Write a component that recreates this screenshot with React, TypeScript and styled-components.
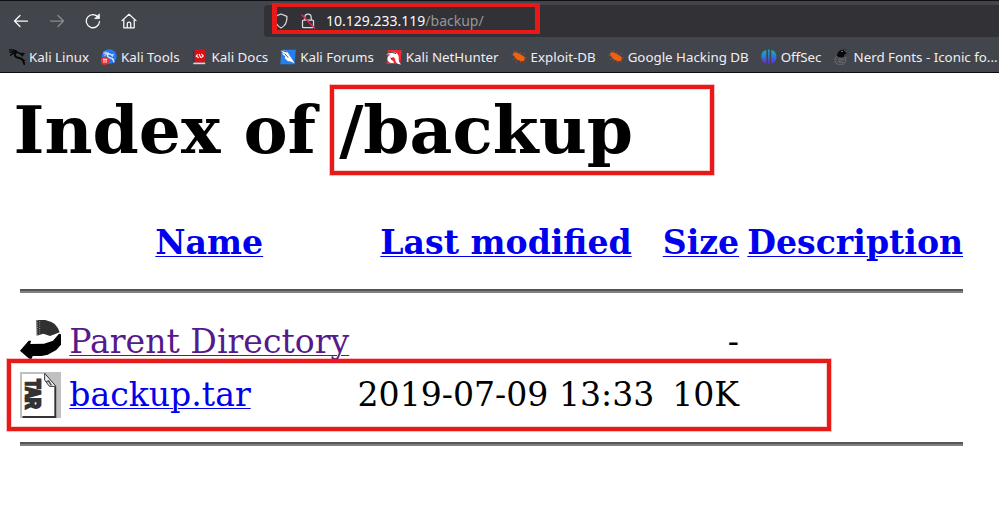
import React from 'react';
import styled, { createGlobalStyle } from 'styled-components';

const GlobalStyle = createGlobalStyle`
  html, body { margin: 0; background: #fff; overflow: hidden; }
  * { box-sizing: border-box; }
`;

const Window = styled.div`
  position: relative;
  width: 999px;
  height: 523px;
  overflow: hidden;
  background: #fff;
`;

const Chrome = styled.header`
  height: 73px;
  background: #43454c;
  border-top: 1px solid #101014;
  border-bottom: 1px solid #0c0c0f;
  font-family: 'Noto Sans', sans-serif;
  font-size: 13.33px;
  color: #fbfbfe;
`;

const NavBar = styled.nav`
  display: flex;
  align-items: center;
  height: 40px;
  padding-left: 13px;
`;

const NavButton = styled.span<{ $dim?: boolean }>`
  display: flex;
  width: 16px;
  height: 16px;
  margin-right: 20px;
  color: ${(p) => (p.$dim ? '#8b8c91' : '#fbfbfe')};
`;

const AddressBar = styled.div`
  display: flex;
  align-items: center;
  flex: 1;
  height: 32px;
  margin-left: 107px;
  padding-left: 9px;
  border-radius: 4px 0 0 4px;
  background: #313136;
`;

const AddressIcon = styled.span`
  display: flex;
  width: 16px;
  height: 16px;
  margin-right: 11px;
  color: #dcdce0;
`;

const Url = styled.span`
  margin-left: -1px;
  font-size: 14px;
  line-height: 18px;
  color: #fbfbfe;
`;

const UrlPath = styled.span`
  color: #96969b;
`;

const Bookmarks = styled.div`
  display: flex;
  align-items: center;
  gap: 12px;
  height: 31px;
  padding-left: 9px;
`;

const Bookmark = styled.span`
  display: flex;
  align-items: center;
  gap: 4px;
  flex: none;
  line-height: 18px;
  white-space: nowrap;
  color: #efeff2;
  svg { flex: none; }
`;

const Page = styled.main`
  font-family: 'DejaVu Serif', serif;
  font-size: 33.12px;
  color: #000;
  padding: 0 36px 0 20px;
`;

const Title = styled.h1`
  margin: 19px 0 0 -6.5px;
  height: 77px;
  line-height: 77px;
  font-size: 66.2px;
  font-weight: 700;
  white-space: nowrap;
`;

const Listing = styled.div`
  display: grid;
  grid-template-columns: 41px 280px 297px 76.3px 215px;
  column-gap: 8.25px;
  align-items: center;
  white-space: nowrap;
`;

const HeadCell = styled.div`
  margin-top: 47px;
  height: 54px;
  line-height: 54px;
  text-align: center;
  font-weight: 700;
`;

const Cell = styled.div<{ $right?: boolean }>`
  height: 53px;
  line-height: 53px;
  text-align: ${(p) => (p.$right ? 'right' : 'left')};
`;

const IconCell = styled.div`
  display: flex;
  align-items: center;
  height: 53px;
  svg { overflow: visible; }
`;

const Rule = styled.div<{ $top: number; $bottom: number }>`
  grid-column: 1 / -1;
  height: 4px;
  width: 943px;
  margin-top: ${(p) => p.$top}px;
  margin-bottom: ${(p) => p.$bottom}px;
  border-top: 2px solid #555;
  border-bottom: 2px solid #808080;
`;

const Link = styled.a<{ $visited?: boolean }>`
  color: ${(p) => (p.$visited ? '#551a8b' : '#0000ee')};
  text-decoration: underline;
  text-decoration-thickness: 1px;
  text-underline-offset: 2px;
`;

const Highlight = styled.div<{ $x: number; $y: number; $w: number; $h: number; $crisp?: boolean }>`
  position: absolute;
  left: ${(p) => p.$x}px;
  top: ${(p) => p.$y}px;
  width: ${(p) => p.$w}px;
  height: ${(p) => p.$h}px;
  border: solid #e81919;
  border-width: ${(p) => (p.$crisp ? '4px 5px' : '4px')};
  box-shadow: ${(p) => (p.$crisp ? 'none' : '0 0 0 1px rgba(232, 25, 25, 0.28), inset 0 0 0 1px rgba(232, 25, 25, 0.2)')};
`;

const Stroke = ({ children }: { children: React.ReactNode }) => (
  <svg width="16" height="16" viewBox="0 0 16 16" fill="none" stroke="currentColor" strokeWidth="1.25" strokeLinecap="round" strokeLinejoin="round">
    {children}
  </svg>
);

const Favicon = ({ children }: { children: React.ReactNode }) => (
  <svg width="16" height="16" viewBox="0 0 16 16">{children}</svg>
);

const Dragon = ({ color }: { color: string }) => (
  <g fill="none" stroke={color} strokeLinecap="round">
    <path d="M.5 1C3 .4 5 1 7.6 2.2M.8 3.4C3 2.4 5 2.6 7.4 3.2M1.5 6.2C3 4.6 5 4 7 4" strokeWidth="1.3" />
    <path d="M6.5 3C9 3 10 3.9 11.6 4.8L13.6 6.5M11.3 4.9L14.8 4.6" strokeWidth="1.7" />
    <path d="M6.7 4C5.2 6.2 6.2 8.2 9 8.7C12.2 9.2 13.8 10.2 14.2 12.2L15.5 15.3" strokeWidth="1.9" />
    <path d="M13.2 10.4L15.5 11.5" strokeWidth="1.2" />
  </g>
);

const Beetle = () => (
  <Favicon>
    <g fill="none" stroke="#a34b20" strokeWidth=".8">
      <path d="M2 2L5 4M5 1L6.5 4M9 2.5L9.5 5M12 4.6L14.5 5M.4 6.5H4M1.6 10.5L5 9M4.6 13.4L7 10M9.5 14V10M13.4 13.6L12 10.5M14 9.2H16" />
    </g>
    <path d="M1.6 4.6L4.2 3.2L8.2 4.4L9.6 5.6L11.2 6.2L13.8 8.2L13.4 11.4L10.4 12.2L6.4 10.8L3.8 8.3Z" fill="#f0600f" />
  </Favicon>
);

const bookmarks = [
  { name: 'Kali Linux', icon: <Favicon><Dragon color="#08080a" /></Favicon> },
  {
    name: 'Kali Tools',
    icon: (
      <Favicon>
        <circle cx="8.2" cy="7.6" r="7.4" fill="#2579f5" />
        <g transform="translate(2.4 2.6) scale(.68)"><Dragon color="#d9ecff" /></g>
        <circle cx="4" cy="11.7" r="4.1" fill="#f02c2c" />
        <path d="M1.8 10.3H6.2M3 10.3V13.9M5.1 10.3V13.9" stroke="#fff" strokeWidth=".9" fill="none" />
      </Favicon>
    ),
  },
  {
    name: 'Kali Docs',
    icon: (
      <Favicon>
        <path d="M1 1H3V14H1Z" fill="#1d3b70" />
        <path d="M2.5 .5H13.2V13.4H2.5Z" fill="#dc1013" />
        <path d="M1.3 13.6H13.2V15.2H1.3Z" fill="#e0d3d3" />
        <path d="M5.8 5.3L4.2 7.2L6.8 8.7M9.4 5L11.2 6.9L9.4 8.7M7 5L8.8 8.7" fill="none" stroke="#fff" strokeWidth="1.1" />
      </Favicon>
    ),
  },
  {
    name: 'Kali Forums',
    icon: (
      <Favicon>
        <path d="M1.6 .7H15.8L14.4 15.2H.3Z" fill="#2580ed" />
        <path d="M.2 1C5 .5 8.2 3 9.5 6.3L14.8 14.6L10.8 12.6L7.6 12L4.8 9.3L5.1 7.3L1.5 4.6L4 4.7Z" fill="#fff" />
        <path d="M0 .8L6.8 3.1M4.7 4.6L8.2 8.6" stroke="#152c48" strokeWidth=".8" />
      </Favicon>
    ),
  },
  {
    name: 'Kali NetHunter',
    icon: (
      <Favicon>
        <path d="M1.8 1H15.8L14.4 15H.6Z" fill="#ef2930" />
        <path d="M0 5.2C4.5 1.4 10.5 2.6 12.3 6.3C13.6 9.5 11.3 12.3 15.2 15.4C9.4 15.2 9.6 11.4 8.8 9.4C7.7 7.3 5 8.2 5.4 10C5.7 11.4 7.3 11.2 8 13.4C5 15 1.4 13.2 1.4 9.8C1.4 7.4 3.4 6 4.8 5.5Z" fill="#fff" />
        <path d="M.3 4.4L6 3.2L10 4.6M4.8 8.6L6.2 11" stroke="#30161b" strokeWidth=".9" fill="none" />
      </Favicon>
    ),
  },
  { name: 'Exploit-DB', icon: <Beetle /> },
  { name: 'Google Hacking DB', icon: <Beetle /> },
  {
    name: 'OffSec',
    icon: (
      <Favicon>
        <defs>
          <linearGradient id="offsec" x1="0" y1="0" x2="0" y2="1">
            <stop offset="0" stopColor="#10b5bd" />
            <stop offset=".5" stopColor="#3475d6" />
            <stop offset="1" stopColor="#6b22dc" />
          </linearGradient>
        </defs>
        <path d="M5.3 .9V15L3.3 13.7C-.9 10.8-.7 3.8 3.3 1.7ZM7.1 .6H8.5V15.2H7.1ZM10.3 .9L12.6 1.8C16.4 4.4 16.4 11.3 12.6 13.8L10.3 15Z" fill="url(#offsec)" />
      </Favicon>
    ),
  },
  {
    name: 'Nerd Fonts - Iconic fo...',
    icon: (
      <Favicon>
        <path d="M3.2 7C-.4 9.8 0 15.2 5.5 15.7C10.5 16 13.2 13 11.3 8Z" fill="#4a4b50" stroke="#77787c" strokeWidth=".9" strokeDasharray="2 .8" />
        <path d="M3 7.4C3 3.5 5.3 1.4 8.3 .8L12.4 .4L10.8 2.4L12.8 4.5L10.4 5.4C10.8 8.2 8.5 9 5.4 8Z" fill="#09090b" />
        <path d="M4.6 10.4L8.3 10L10.3 11.3M4 12.6L7 12.8L9.3 14" fill="none" stroke="#77787c" strokeWidth=".9" />
        <path d="M7.2 2.6L9 2.2M10.3 1.4L11.4 1.7" stroke="#bbb" strokeWidth=".7" />
      </Favicon>
    ),
  },
];

const ParentIcon = () => (
  <svg width="41" height="46" viewBox="0 0 123 138">
    <path d="M49 3H76L94 9L104 15L114 28L119 40L104 46L90 51L70 44L50 50Z" fill="#303030" />
    <path d="M52 3V49M59 6V46" stroke="#999" strokeWidth="3" strokeDasharray="3 4" />
    <path d="M0 95L26 65H33L31 75L72 74L99 65L117 44L123 46V77L109 93L83 107L65 111H38L35 119H28L17 110Z" fill="#000" />
  </svg>
);

const TarIcon = () => (
  <svg width="41" height="46" viewBox="0 0 123 138">
    <path d="M0 0H123V138H0Z" fill="#c0c0c0" />
    <path d="M6 6H76L109 46V132H6Z" fill="#fff" />
    <path d="M106 45V135H8" fill="none" stroke="#333" strokeWidth="6" />
    <path d="M74 4V24L88 43H108Z" fill="#eee" stroke="#333" strokeWidth="3" />
    <path d="M78 30L86 27L94 40" fill="none" stroke="#555" strokeWidth="5" />
    <text transform="translate(17 22) rotate(90)" fontFamily="Liberation Sans" fontWeight="700" fontSize="58" stroke="#333" strokeWidth="8" fill="#333" textLength="88" lengthAdjust="spacingAndGlyphs">TAR</text>
  </svg>
);

export default function App() {
  return (
    <Window>
      <GlobalStyle />
      <Chrome>
        <NavBar>
          <NavButton><Stroke><path d="M14.5 8H1.7M7 2.5L1.5 8L7 13.5" /></Stroke></NavButton>
          <NavButton $dim><Stroke><path d="M1.5 8H14.3M9 2.5L14.5 8L9 13.5" /></Stroke></NavButton>
          <NavButton>
            <Stroke>
              <path d="M13.3 4.3A6.6 6.6 0 1 0 14.5 8.5" />
              <path d="M14.4 1.2V5.6H10Z" fill="currentColor" strokeWidth=".8" />
            </Stroke>
          </NavButton>
          <NavButton>
            <Stroke><path d="M1 7.6L8 1.2L15 7.6M2.8 6.2V14.8H13.2V6.2M6.3 14.5V10.4Q6.3 9 8 9Q9.7 9 9.7 10.4V14.5" /></Stroke>
          </NavButton>
          <AddressBar>
            <AddressIcon><Stroke><path d="M8 1L13.9 3.4C14.3 8.8 12.6 12.7 8 15C3.4 12.7 1.7 8.8 2.1 3.4Z" /></Stroke></AddressIcon>
            <AddressIcon>
              <Stroke>
                <path d="M4.8 7V4.4C4.8-.1 11.2-.1 11.2 4.4V7M3.5 7H12.5Q13.5 7 13.5 8V13.7Q13.5 14.7 12.5 14.7H3.5Q2.5 14.7 2.5 13.7V8Q2.5 7 3.5 7Z" />
                <path d="M2 2L14.5 15" stroke="#e22850" strokeWidth="1.5" />
              </Stroke>
            </AddressIcon>
            <Url>10.129.233.119<UrlPath>/backup/</UrlPath></Url>
          </AddressBar>
        </NavBar>
        <Bookmarks>
          {bookmarks.map((b) => <Bookmark key={b.name}>{b.icon}{b.name}</Bookmark>)}
        </Bookmarks>
      </Chrome>
      <Page>
        <Title>Index of /backup</Title>
        <Listing>
          <HeadCell />
          <HeadCell><Link>Name</Link></HeadCell>
          <HeadCell><Link>Last modified</Link></HeadCell>
          <HeadCell><Link>Size</Link></HeadCell>
          <HeadCell><Link>Description</Link></HeadCell>
          <Rule $top={19} $bottom={22} />
          <IconCell><ParentIcon /></IconCell>
          <Cell><Link $visited>Parent Directory</Link></Cell>
          <Cell />
          <Cell $right>-</Cell>
          <Cell />
          <IconCell><TarIcon /></IconCell>
          <Cell><Link>backup.tar</Link></Cell>
          <Cell>2019-07-09 13:33</Cell>
          <Cell $right>10K</Cell>
          <Cell />
          <Rule $top={21} $bottom={0} />
        </Listing>
      </Page>
      <Highlight $crisp $x={272} $y={3} $w={268} $h={31} />
      <Highlight $x={330} $y={85} $w={384} $h={90} />
      <Highlight $x={7} $y={359} $w={824} $h={72} />
    </Window>
  );
}
